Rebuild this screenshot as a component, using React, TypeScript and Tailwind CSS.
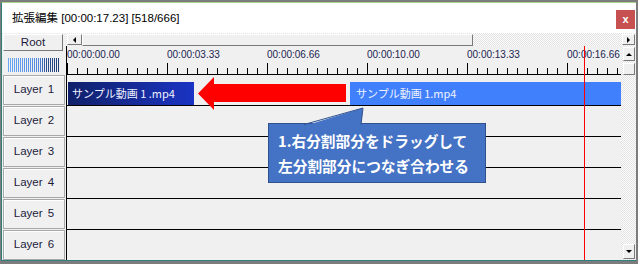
const labels = ["00:00:00.00", "00:00:03.33", "00:00:06.66", "00:00:10.00", "00:00:13.33", "00:00:16.66"];
const layers = [1, 2, 3, 4, 5, 6];
const raised = "bg-[#f0f0f0] border border-t-white border-l-white border-r-[#7a7a7a] border-b-[#7a7a7a]";
const checker = "bg-[image:repeating-conic-gradient(#e2e2e2_0_25%,#fdfdfd_0_50%)] bg-[length:2px_2px]";
const ui = { fontFamily: '"Liberation Sans", "Noto Sans CJK JP", sans-serif' };
const jp = { fontFamily: '"Noto Sans CJK JP", sans-serif' };

function Tri({ dir }: { dir: "l" | "r" | "u" | "d" }) {
  const pts = { l: "4,0 4,6 1,3", r: "1,0 1,6 4,3", u: "0,4 6,4 3,1", d: "0,1 6,1 3,4" }[dir];
  const w = dir === "l" || dir === "r" ? 5 : 6;
  const h = dir === "l" || dir === "r" ? 6 : 5;
  return <svg width={w} height={h} viewBox={`0 0 ${w} ${h}`}><polygon points={pts} fill="#000" /></svg>;
}

function Stripes() {
  return (
    <svg width="51" height="14" viewBox="0 0 51 14">
      <defs>
        <linearGradient id="st" x1="0" x2="51" y1="0" y2="0" gradientUnits="userSpaceOnUse">
          <stop offset="0" stopColor="#6aa8f4" />
          <stop offset="0.6" stopColor="#4f86dc" />
          <stop offset="0.75" stopColor="#2b4f92" />
          <stop offset="1" stopColor="#1f3c74" />
        </linearGradient>
      </defs>
      {Array.from({ length: 26 }).map((_, i) => (
        <rect key={i} x={i * 2} y="0" width="1" height="14" fill="url(#st)" />
      ))}
    </svg>
  );
}

function Ticks() {
  return (
    <svg width="560" height="11" viewBox="0 0 560 11" className="block">
      {Array.from({ length: 56 }).map((_, k) => (
        <line key={k} x1={k * 10 + 0.5} x2={k * 10 + 0.5} y1={k % 10 === 0 ? 0 : 5} y2="11" stroke="#000" strokeWidth="1" />
      ))}
    </svg>
  );
}

export default function App() {
  return (
    <div className="w-[638px] h-[264px] bg-[#7c7c7c] pt-[2px] pl-px pr-[2px] overflow-hidden">
      <div className="h-[259px] flex flex-col border-t border-t-[#a6d38a] border-l border-l-[#2f7f7f] border-b border-b-[#2f7f7f] bg-[#f0f0f0] overflow-hidden">
        {/* title bar */}
        <div className="h-[30px] bg-white flex items-start justify-between pl-[10px] pr-px shrink-0">
          <span className="mt-[7px] text-[11.5px] leading-[16px] text-black" style={ui}>拡張編集 [00:00:17.23] [518/666]</span>
          <div className="mt-[7px] w-[19px] h-[19px] bg-[#c75050] flex items-center justify-center text-white text-[11px] font-bold leading-none" style={ui}>x</div>
        </div>

        <div className="flex-1 flex min-h-0">
          {/* left column */}
          <div className="w-[64px] shrink-0 flex flex-col">
            <div className={`mt-px ml-px w-[60px] h-[17px] flex items-center justify-center text-[11.5px] text-[#1c1c3c] ${raised}`} style={ui}>Root</div>
            <div className="mt-[7px] ml-[6px] h-[14px]"><Stripes /></div>
            <div className="mt-[3px] flex flex-col">
              {layers.map(n => (
                <div key={n} className="ml-px mb-px w-[62px] h-[30px] border border-[#a8a8a8] shadow-[inset_1px_1px_0_#fff] bg-[#f0f0f0] flex items-center justify-center text-[11.5px] text-[#1c1c3c] [word-spacing:2px]" style={ui}>
                  Layer {n}
                </div>
              ))}
            </div>
          </div>

          {/* right column */}
          <div className="flex-1 flex flex-col min-w-0">
            {/* horizontal scrollbar */}
            <div className={`h-[13px] shrink-0 flex items-start pt-px ${checker}`}>
              <div className={`ml-px w-[15px] h-[11px] flex items-center justify-center ${raised}`}><Tri dir="l" /></div>
              <div className={`w-[391px] h-[12px] ${raised}`} />
              <div className="flex-1" />
              <div className={`mr-px w-[13px] h-[11px] flex items-center justify-center ${raised}`}><Tri dir="r" /></div>
            </div>

            <div className="flex-1 flex min-h-0">
              {/* timeline */}
              <div className="relative flex-1 border-l border-black overflow-hidden flex flex-col">
                <div className="h-[29px] shrink-0 border-b border-black flex flex-col">
                  <div className="flex pt-[3px] h-[17px]">
                    {labels.map(l => (
                      <div key={l} className="w-[100px] shrink-0 text-[10px] leading-[12px] text-[#1b2450]" style={ui}>{l}</div>
                    ))}
                  </div>
                  <Ticks />
                </div>
                {layers.map(n => (
                  <div key={n} className="h-[31px] shrink-0 border-b border-black flex items-end">
                    {n === 1 && (
                      <>
                        <div className="ml-px w-[126px] h-[23px] bg-gradient-to-r from-[#10206a] to-[#1a34c4] flex items-center pl-[4px] text-[11px] text-[#eef0ff] whitespace-nowrap" style={jp}>サンプル動画 1 .mp4</div>
                        <div className="ml-[156px] flex-1 h-[23px] bg-[#4080fc] flex items-center pl-[6px] text-[11px] text-[#eef2ff] whitespace-nowrap" style={jp}>サンプル動画 1.mp4</div>
                      </>
                    )}
                  </div>
                ))}

                {/* playhead */}
                <div className="absolute left-[517px] top-0 bottom-0 w-px bg-[#ff0000]" />

                {/* red arrow */}
                <svg className="absolute left-[131px] top-[31px]" width="149" height="34" viewBox="0 0 149 34">
                  <polygon points="0,16.5 16,0 16,7 148,7 148,25 16,25 16,33" fill="#ff0000" />
                </svg>

                {/* callout */}
                <div className="absolute left-[201px] top-[77px] w-[218px] h-[60px] bg-[#4472c4] border border-[#2f528f] flex flex-col justify-center pl-[9px] text-white font-bold text-[14.7px] leading-[25px]" style={jp}>
                  <svg className="absolute left-[34px] top-[-17px]" width="62" height="19" viewBox="0 0 62 19">
                    <polygon points="1,19 60,1 58,19" fill="#4472c4" />
                    <polyline points="1,17.5 60,1 58,17.5" fill="none" stroke="#2f528f" strokeWidth="1" />
                  </svg>
                  <span className="relative">1.右分割部分をドラッグして</span>
                  <span className="relative">左分割部分につなぎ合わせる</span>
                </div>
              </div>

              {/* vertical scrollbar */}
              <div className={`w-[15px] shrink-0 flex flex-col pl-[2px] pr-px ${checker}`}>
                <div className={`mt-px h-[14px] flex items-center justify-center ${raised}`}><Tri dir="u" /></div>
                <div className={`mt-[2px] h-[12px] ${raised}`} />
                <div className="flex-1" />
                <div className={`mb-px h-[15px] flex items-center justify-center ${raised}`}><Tri dir="d" /></div>
              </div>
            </div>
          </div>
        </div>
      </div>
    </div>
  );
}
